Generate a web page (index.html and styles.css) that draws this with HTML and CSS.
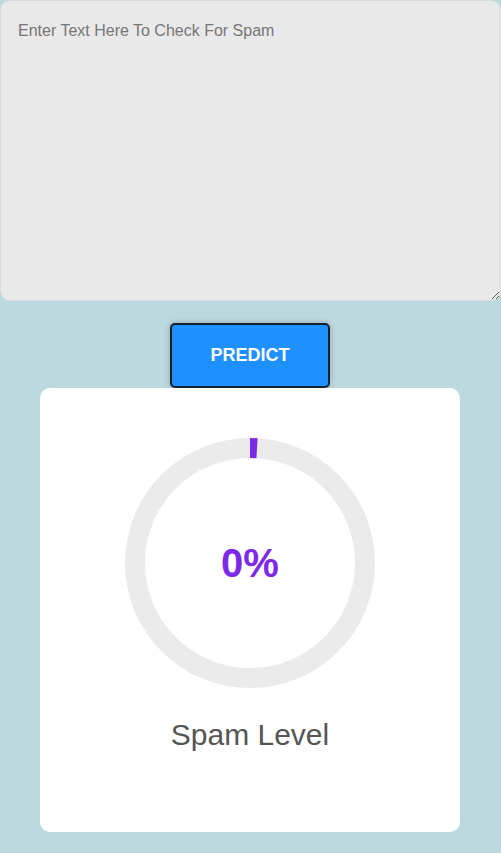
FILE: index.html
```html
<!DOCTYPE html>
<html>
<head>
<meta charset="utf-8">
<link rel="stylesheet" href="styles.css">
</head>
<body>
<main class="page">
  <textarea class="input" placeholder="Enter Text Here To Check For Spam"></textarea>
  <button class="predict">PREDICT</button>
  <section class="card">
    <div class="gauge">
      <svg class="ring" width="250" height="250" viewBox="0 0 250 250">
        <circle cx="125" cy="125" r="115" fill="none" stroke="#ebebeb" stroke-width="20"/>
        <path d="M125 10 A115 115 0 0 1 132 10.2" fill="none" stroke="#7d2ae8" stroke-width="20"/>
      </svg>
      <div class="value">0%</div>
    </div>
    <div class="label">Spam Level</div>
  </section>
</main>
</body>
</html>
```
FILE: styles.css
```css
html, body {
  margin: 0;
  padding: 0;
  background: #bdd9e0;
}
.page {
  width: 500px;
  display: flex;
  flex-direction: column;
  align-items: center;
  font-family: "Liberation Sans", Arial, sans-serif;
}
.input {
  box-sizing: border-box;
  align-self: flex-start;
  width: 501px;
  height: 301px;
  margin: 0;
  padding: 21px 17px 16px;
  background: #e9e9e9;
  border: 1px solid #d4dcdf;
  border-radius: 10px;
  font-family: "Liberation Sans", Arial, sans-serif;
  font-size: 16px;
  color: #333;
  display: block;
}
.input::placeholder {
  color: #777;
}
.predict {
  margin-top: 22px;
  width: 160px;
  height: 65px;
  background: #1e90ff;
  color: #fff;
  border: 2px solid #14202e;
  border-radius: 5px;
  font-family: "Liberation Sans", Arial, sans-serif;
  font-weight: bold;
  font-size: 18px;
  box-shadow: 0 0 6px rgba(0, 0, 0, 0.25);
}
.card {
  box-sizing: border-box;
  width: 420px;
  height: 444px;
  margin-top: 0;
  background: #fff;
  border-radius: 10px;
  padding-top: 50px;
  display: flex;
  flex-direction: column;
  align-items: center;
}
.gauge {
  position: relative;
  width: 250px;
  height: 250px;
}
.ring {
  display: block;
}
.value {
  position: absolute;
  inset: 0;
  display: flex;
  align-items: center;
  justify-content: center;
  font-size: 40px;
  font-weight: bold;
  color: #7d2ae8;
}
.label {
  margin-top: 30px;
  font-size: 30px;
  color: #555;
}
```
